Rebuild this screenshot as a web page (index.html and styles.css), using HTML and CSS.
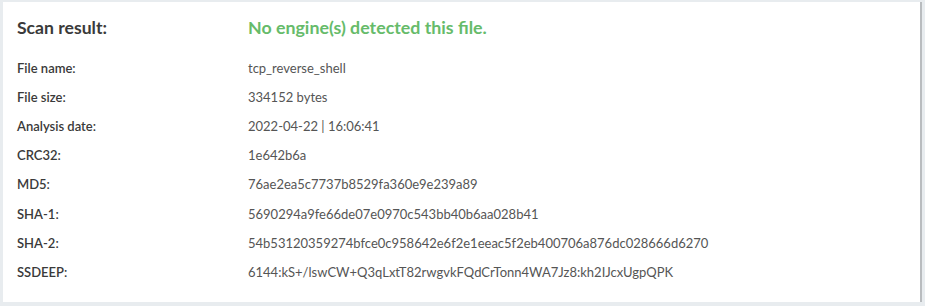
FILE: index.html
```html
<!DOCTYPE html>
<html>
<head>
<meta charset="utf-8">
<link rel="stylesheet" href="styles.css">
</head>
<body>
<div class="card">
  <div class="head">
    <div class="head-label">Scan result:</div>
    <div class="head-value">No engine(s) detected this file.</div>
  </div>
  <div class="rows">
    <div class="row"><div class="label">File name:</div><div class="value">tcp_reverse_shell</div></div>
    <div class="row"><div class="label">File size:</div><div class="value">334152 bytes</div></div>
    <div class="row"><div class="label">Analysis date:</div><div class="value">2022-04-22 | 16:06:41</div></div>
    <div class="row"><div class="label">CRC32:</div><div class="value">1e642b6a</div></div>
    <div class="row"><div class="label">MD5:</div><div class="value">76ae2ea5c7737b8529fa360e9e239a89</div></div>
    <div class="row"><div class="label">SHA-1:</div><div class="value">5690294a9fe66de07e0970c543bb40b6aa028b41</div></div>
    <div class="row"><div class="label">SHA-2:</div><div class="value">54b53120359274bfce0c958642e6f2e1eeac5f2eb400706a876dc028666d6270</div></div>
    <div class="row"><div class="label">SSDEEP:</div><div class="value">6144:kS+/lswCW+Q3qLxtT82rwgvkFQdCrTonn4WA7Jz8:kh2IJcxUgpQPK</div></div>
  </div>
</div>
</body>
</html>
```
FILE: styles.css
```css
html, body {
  margin: 0;
  padding: 0;
}
body {
  background: #e8ecef;
  font-family: Lato, "Open Sans", sans-serif;
  padding: 2px 1px 0 3px;
  height: 306px;
  box-sizing: border-box;
}
.card {
  background: #fff;
  width: 919px;
  height: 300px;
  box-sizing: border-box;
  border-right: 2px solid #b9bcbf;
  padding: 12px 0 0 14px;
}
.head {
  display: grid;
  grid-template-columns: 231px auto;
  align-items: center;
  height: 26px;
}
.head-label {
  font-size: 17.6px;
  font-weight: 700;
  color: #3a3a3a;
}
.head-value {
  font-size: 17.8px;
  font-weight: 700;
  color: #66bb6a;
}
.rows {
  margin-top: 13px;
}
.row {
  display: grid;
  grid-template-columns: 231px auto;
  align-items: center;
  height: 29.2px;
  font-size: 13px;
}
.label {
  font-weight: 600;
  color: #3a3a3a;
}
.value {
  color: #555;
}
```
